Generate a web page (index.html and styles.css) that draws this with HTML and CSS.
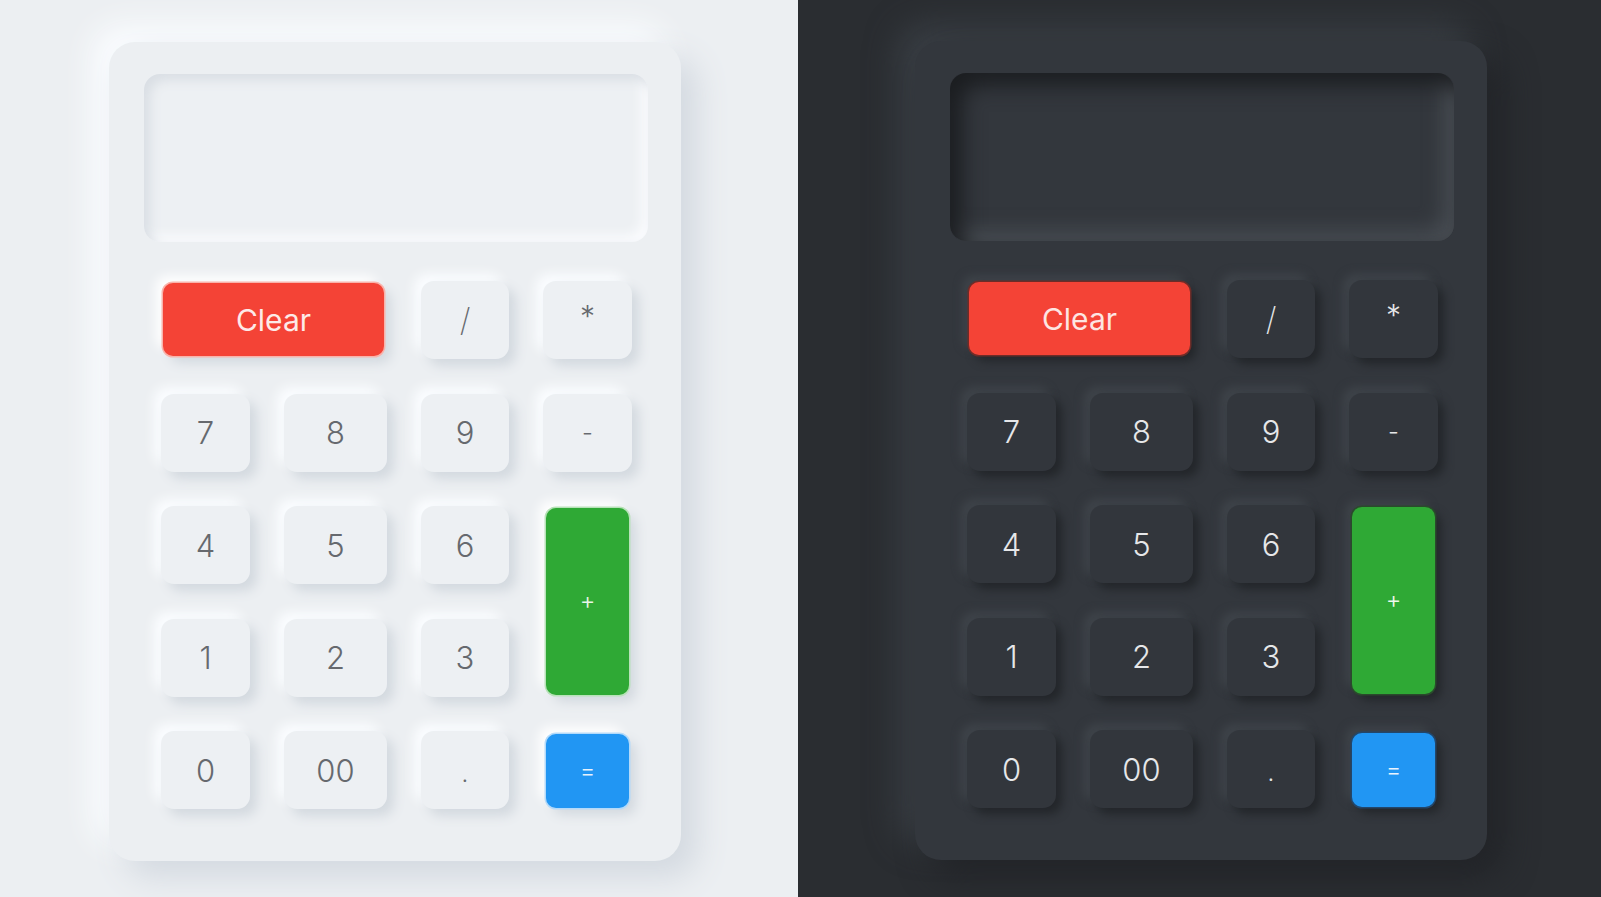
FILE: index.html
```html
<!DOCTYPE html>
<html>
<head>
<meta charset="utf-8">
<title>Neumorphic Calculator</title>
<link rel="stylesheet" href="styles.css">
</head>
<body>
<main class="page">
  <section class="panel panel-light">
    <div class="calc">
      <div class="display"></div>
      <div class="keys">
        <button class="key key-clear">Clear</button>
        <button class="key key-slash">/</button>
        <button class="key op op-star">*</button>
        <button class="key">7</button>
        <button class="key">8</button>
        <button class="key">9</button>
        <button class="key op op-minus">-</button>
        <button class="key">4</button>
        <button class="key">5</button>
        <button class="key">6</button>
        <button class="key key-plus op">+</button>
        <button class="key">1</button>
        <button class="key">2</button>
        <button class="key">3</button>
        <button class="key">0</button>
        <button class="key">00</button>
        <button class="key op op-dot">.</button>
        <button class="key key-equals op">=</button>
      </div>
    </div>
  </section>
  <section class="panel panel-dark">
    <div class="calc">
      <div class="display"></div>
      <div class="keys">
        <button class="key key-clear">Clear</button>
        <button class="key key-slash">/</button>
        <button class="key op op-star">*</button>
        <button class="key">7</button>
        <button class="key">8</button>
        <button class="key">9</button>
        <button class="key op op-minus">-</button>
        <button class="key">4</button>
        <button class="key">5</button>
        <button class="key">6</button>
        <button class="key key-plus op">+</button>
        <button class="key">1</button>
        <button class="key">2</button>
        <button class="key">3</button>
        <button class="key">0</button>
        <button class="key">00</button>
        <button class="key op op-dot">.</button>
        <button class="key key-equals op">=</button>
      </div>
    </div>
  </section>
</main>
</body>
</html>
```
FILE: styles.css
```css
* { box-sizing: border-box; }
html, body { margin: 0; padding: 0; }
body {
  width: 1601px;
  height: 897px;
  overflow: hidden;
  font-family: "Inter", "Noto Sans", "Liberation Sans", sans-serif;
}
.page {
  display: grid;
  grid-template-columns: 798px 803px;
  height: 897px;
}
.panel {
  height: 897px;
  overflow: hidden;
}
.panel-light {
  background: #eceff2;
  padding: 42px 0 0 109px;
}
.panel-dark {
  background: #2a2d31;
  padding: 41px 0 0 117px;
}
.calc {
  width: 572px;
  height: 819px;
  border-radius: 26px;
  padding: 32px 33px 0 35px;
}
.display {
  width: 504px;
  height: 168px;
  border-radius: 16px;
}
.keys {
  margin: 39px 16px 0 17px;
  display: grid;
  grid-template-columns: 89px 103px 88px 89px;
  grid-template-rows: repeat(5, 78px);
  column-gap: 34px;
  row-gap: 34.5px;
}
.key {
  border: 0;
  border-radius: 13px;
  font-family: inherit;
  font-size: 31px;
  font-weight: 300;
  padding: 0;
  display: flex;
  align-items: center;
  justify-content: center;
  line-height: 1;
}
.key-clear {
  grid-column: 1 / span 2;
  margin: 2px 3px 3px 2px;
  border-radius: 10px;
  font-weight: 400;
  font-size: 30px;
}
.key-plus {
  grid-column: 4;
  grid-row: 3 / span 2;
  margin: 2px 3px;
  border-radius: 10px;
}
.key-equals {
  grid-column: 4;
  grid-row: 5;
  margin: 3px 3px 1px;
  border-radius: 10px;
}
.op { font-size: 24px; }
.op-star { font-size: 30px; padding-bottom: 8px; }
.op-dot { padding-top: 8px; }
.key-slash { font-size: 32px; font-weight: 200; }

/* light theme */
.panel-light .calc {
  background: #eceff2;
  box-shadow: 16px 16px 32px #d3d9e0, -16px -16px 32px #fbfdff;
}
.panel-light .display {
  background: #edf0f3;
  box-shadow: inset 6px 6px 12px #d9dee4, inset -6px -6px 12px #fbfcfe;
}
.panel-light .key {
  background: #edf0f3;
  color: #66696e;
  box-shadow: 7px 7px 12px #d3d9df, -7px -7px 12px #fbfdff;
}
.panel-light .key-clear {
  background: #f44336;
  color: #fdeae8;
  box-shadow: 0 0 0 1.5px #f9b3ab, 7px 7px 12px #d3d9df, -7px -7px 12px #ffffff;
}
.panel-light .key-plus {
  background: #2fa935;
  color: #e9f6ea;
  box-shadow: 0 0 0 1.5px #b8e2b9, 7px 7px 12px #d3d9df, -7px -7px 12px #ffffff;
}
.panel-light .key-equals {
  background: #2196f3;
  color: #e6f2fd;
  box-shadow: 0 0 0 1.5px #b3dafa, 7px 7px 12px #d3d9df, -7px -7px 12px #ffffff;
}

/* dark theme */
.panel-dark .calc {
  background: #33373d;
  box-shadow: 16px 16px 32px #222428, -16px -16px 32px #3a3f45;
}
.panel-dark .display {
  background: #33373d;
  box-shadow: inset 12px 12px 22px #1b1d20, inset -10px -10px 20px #4a4f55;
}
.panel-dark .key {
  background: #32363c;
  color: #e6e7e9;
  box-shadow: 6px 6px 10px #23262a, -6px -6px 10px #3f444a;
}
.panel-dark .key-clear {
  background: #f44336;
  color: #fde5e2;
  box-shadow: 0 0 0 1.5px #6e2c28, 6px 6px 10px #23262a, -6px -6px 10px #3f444a;
}
.panel-dark .key-plus {
  background: #2fa935;
  color: #eef8ee;
  box-shadow: 0 0 0 1.5px #2a4a2c, 6px 6px 10px #23262a, -6px -6px 10px #3f444a;
}
.panel-dark .key-equals {
  background: #2196f3;
  color: #eaf4fe;
  box-shadow: 0 0 0 1.5px #23466a, 6px 6px 10px #23262a, -6px -6px 10px #3f444a;
}
```
